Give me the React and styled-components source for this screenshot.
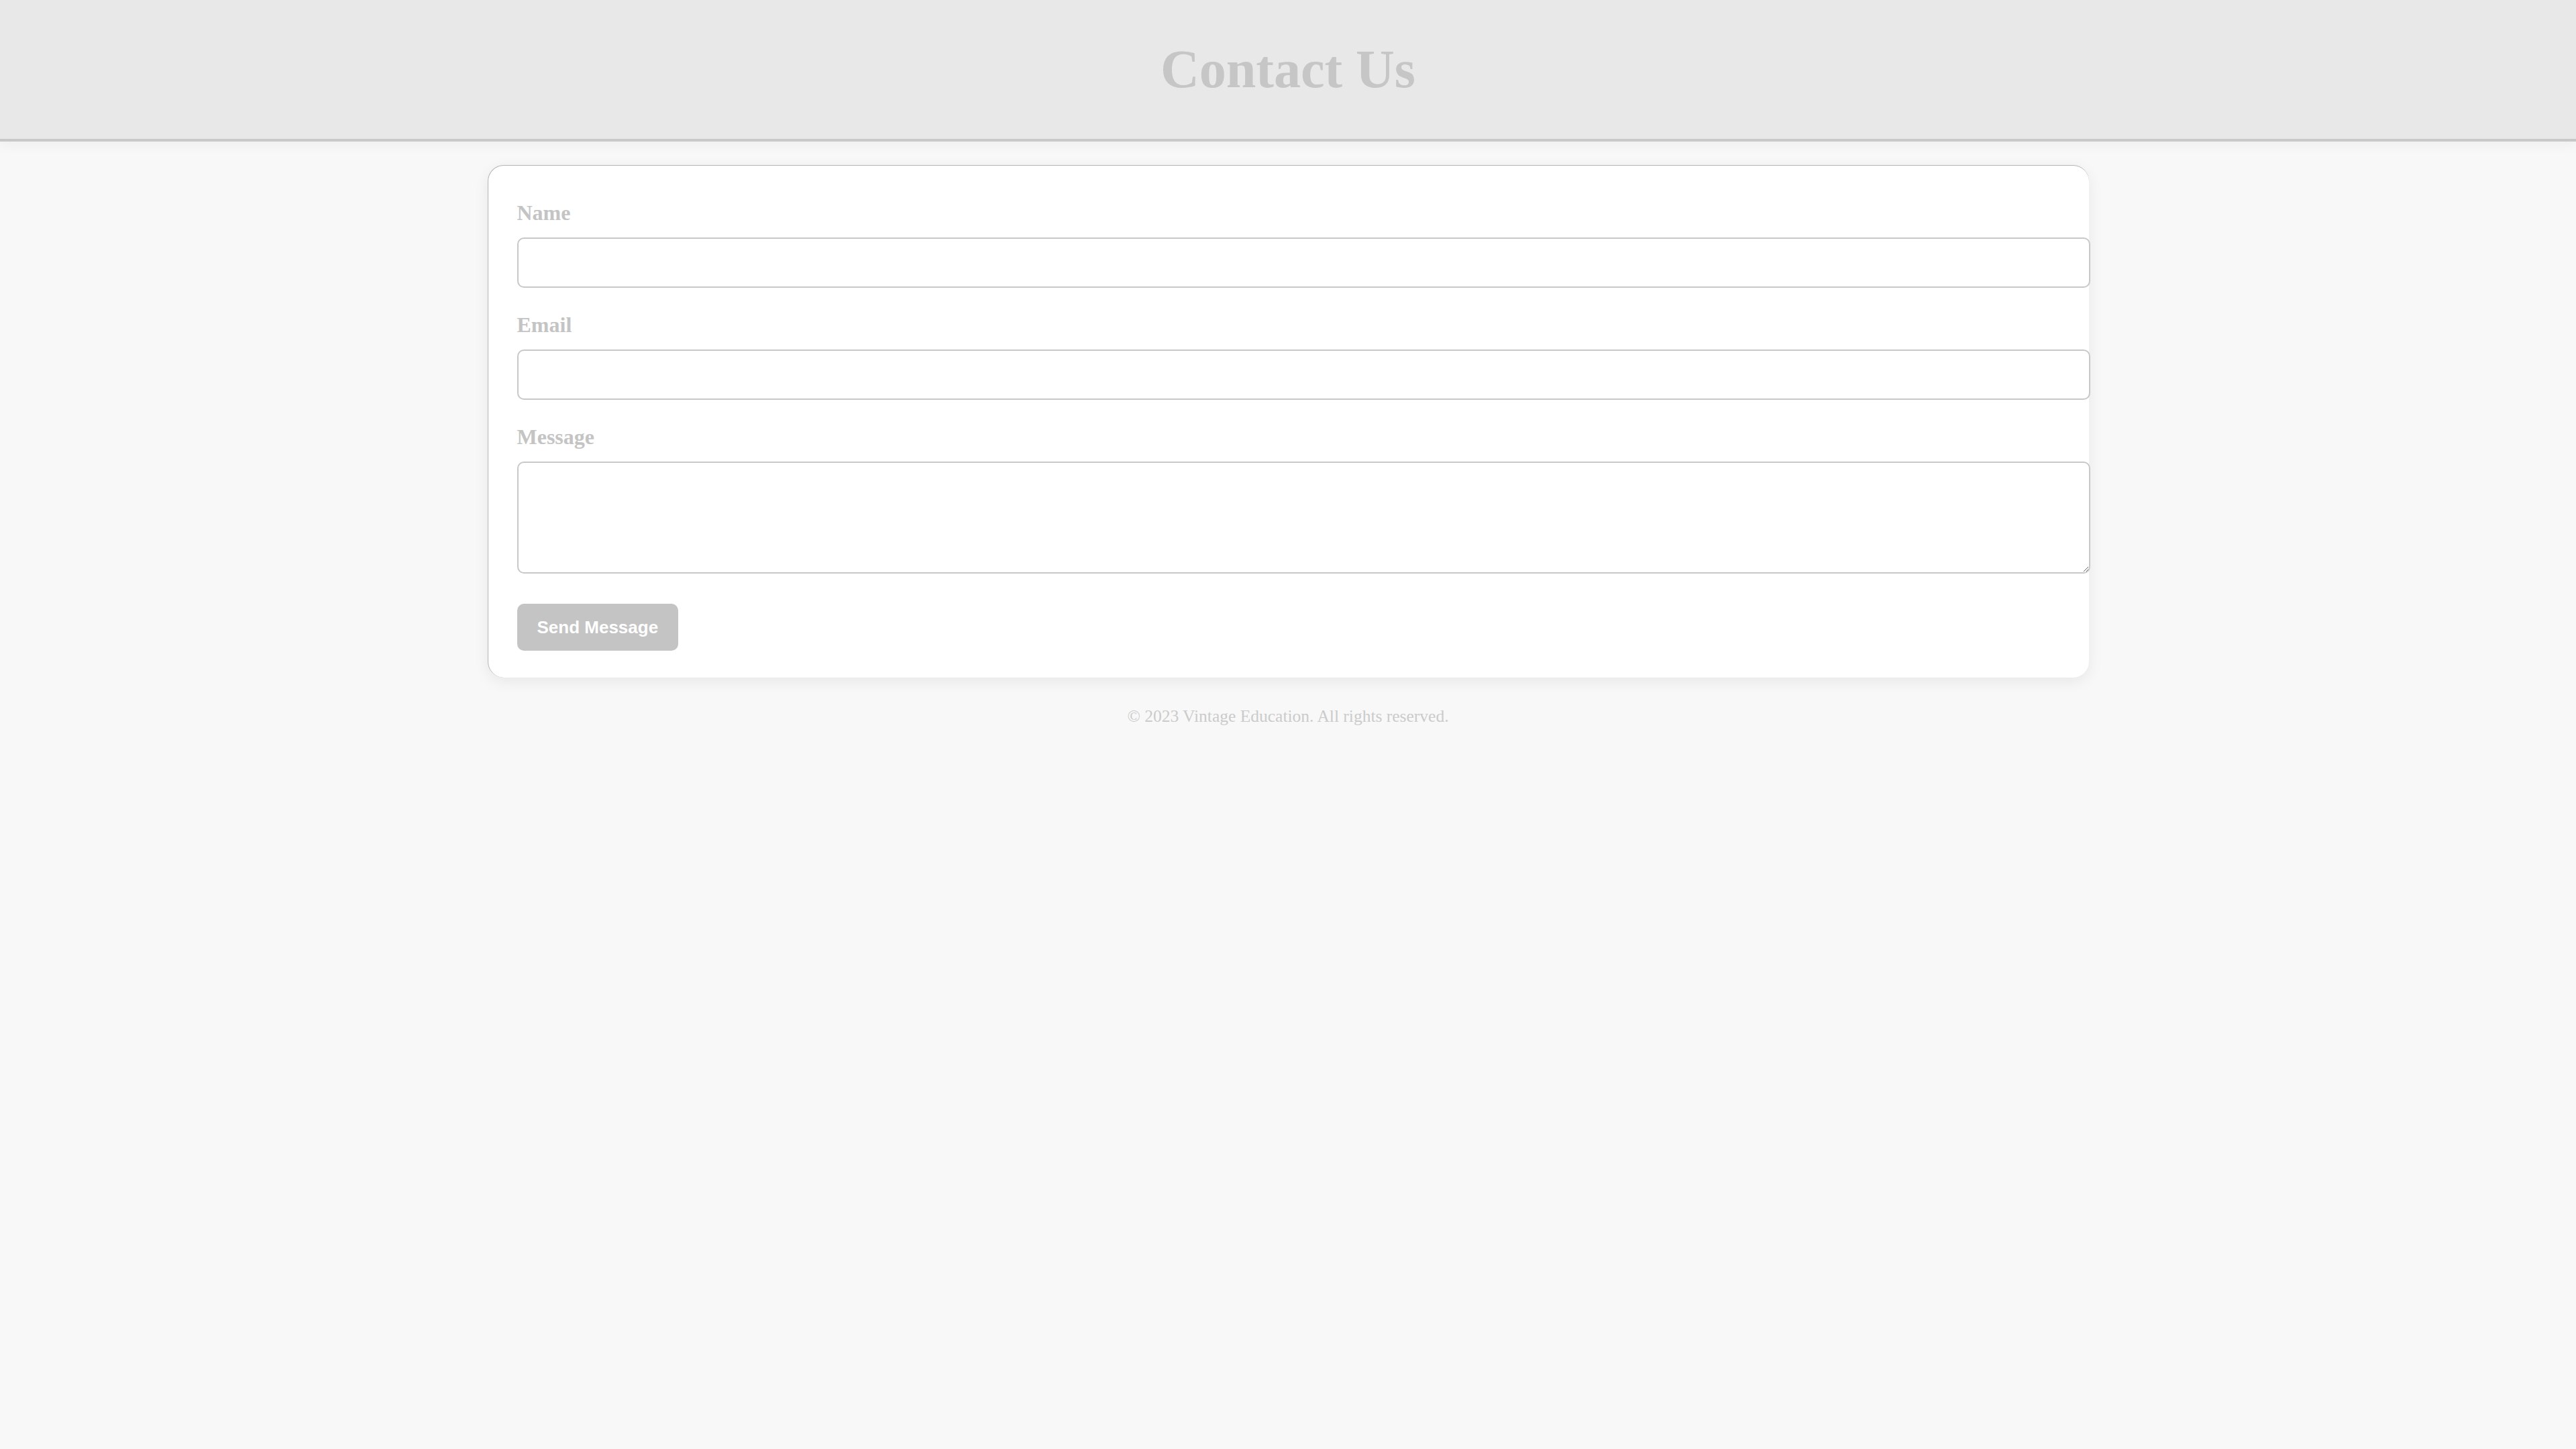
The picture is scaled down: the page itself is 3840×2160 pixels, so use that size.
import React from "react";
import styled, { createGlobalStyle } from "styled-components";

const GlobalStyle = createGlobalStyle`
  body {
    margin: 0;
    background: #f8f8f8;
    font-family: "Liberation Serif", "Times New Roman", serif;
  }
`;

export const Header = styled.header`
  background: #e8e8e8;
  border-bottom: 4px solid #c8c8c8;
  padding: 58px 0;
  text-align: center;
  box-shadow: 0 6px 18px rgba(0, 0, 0, 0.04);
`;

export const Title = styled.h1`
  margin: 0;
  font-family: "Liberation Serif", serif;
  font-size: 80px;
  font-weight: 700;
  color: #c6c6c6;
`;

export const Card = styled.main`
  width: 2387px;
  box-sizing: border-box;
  margin: 35px auto 0;
  padding: 52px 44px 40px 43px;
  background: #ffffff;
  border-radius: 24px;
  border-top: 1px solid #b4b4b4;
  border-left: 1px solid #b4b4b4;
  box-shadow: 0 6px 22px rgba(0, 0, 0, 0.07);
`;

export const Form = styled.form`
  display: flex;
  flex-direction: column;
  align-items: flex-start;
`;

export const Label = styled.label`
  display: block;
  margin-bottom: 18px;
  font-family: "Liberation Serif", serif;
  font-size: 32px;
  font-weight: 700;
  color: #c4c4c4;
`;

export const Input = styled.input`
  display: block;
  width: 100%;
  height: 71px;
  padding: 0 21px;
  margin: 0 0 37px;
  border: 2px solid #c8c8c8;
  border-radius: 10px;
  background: #fff;
  font-size: 28px;
  font-family: "Liberation Sans", Arial, sans-serif;
`;

export const TextArea = styled.textarea`
  display: block;
  width: 100%;
  height: 163px;
  padding: 0 21px;
  margin: 0;
  border: 2px solid #c8c8c8;
  border-radius: 10px;
  background: #fff;
  font-size: 28px;
  font-family: "Liberation Sans", Arial, sans-serif;
`;

export const Button = styled.button`
  margin-top: 45px;
  height: 70px;
  padding: 0 30px;
  border: none;
  border-radius: 10px;
  background: #c4c4c4;
  color: #ffffff;
  font-family: "Liberation Sans", Arial, sans-serif;
  font-size: 26px;
  font-weight: 700;
  cursor: pointer;
`;

export const Footer = styled.footer`
  margin-top: 43px;
  text-align: center;
  font-family: "Liberation Serif", serif;
  font-size: 25.5px;
  color: #cbcbcb;
`;

const App = () => {
  return (
    <>
      <GlobalStyle />
      <Header>
        <Title>Contact Us</Title>
      </Header>
      <Card>
        <Form onSubmit={(e) => e.preventDefault()}>
          <Label htmlFor="name">Name</Label>
          <Input id="name" type="text" />
          <Label htmlFor="email">Email</Label>
          <Input id="email" type="email" />
          <Label htmlFor="message">Message</Label>
          <TextArea id="message" />
          <Button type="submit">Send Message</Button>
        </Form>
      </Card>
      <Footer>© 2023 Vintage Education. All rights reserved.</Footer>
    </>
  );
};

export default App;
